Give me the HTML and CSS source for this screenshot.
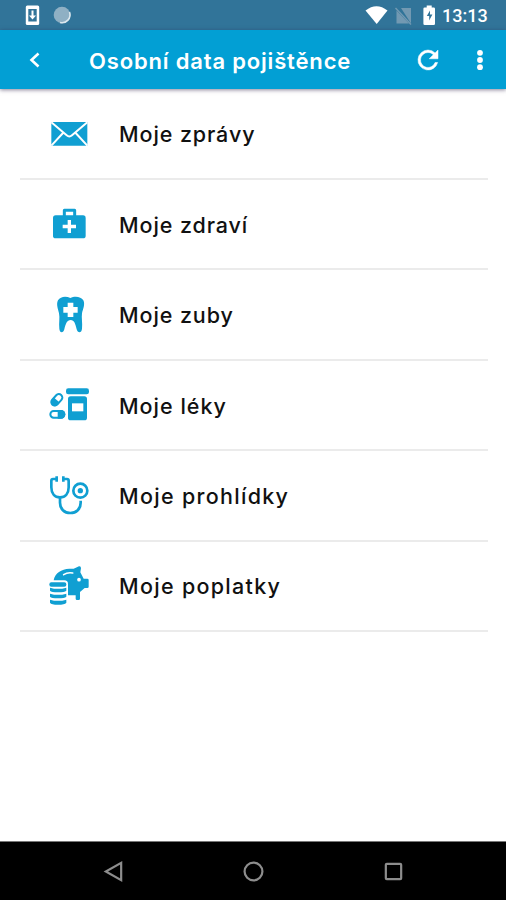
FILE: index.html
```html
<!DOCTYPE html>
<html lang="cs">
<head>
<meta charset="utf-8">
<title>Osobní data pojištěnce</title>
<link rel="stylesheet" href="styles.css">
</head>
<body>
<div class="screen">
  <div class="status">
    <svg class="status-left" viewBox="0 0 54 30">
      <rect x="5.800" y="5.500" width="13.400" height="19.500" rx="1.500" fill="#fff"/>
      <path d="M8.300 9h8.400v12.500H8.300z" fill="#317499"/>
      <path d="M11.500 10.500h2v5h2.500l-3.500 4-3.500-4h2.500z" fill="#fff"/>
      <circle cx="42" cy="15" r="8.300" fill="#8fb0c4"/>
      <path d="M49.500 12a8 8 0 0 1-9.500 10.500" fill="none" stroke="#dce8ee" stroke-width="1.600"/>
    </svg>
    <svg class="status-right" viewBox="0 0 76 30">
      <path d="M5.500 10.500Q16.500 2 27.500 10.500L16.700 24z" fill="#fff"/>
      <path d="M41 8h10v15.500z M36.500 10.500 49 23.500H36.500z" fill="#7299b2"/>
      <path d="m35.500 8 15.500 16.500" stroke="#7299b2" stroke-width="1.400"/>
      <path d="M75 8.700v15a1.300 1.300 0 0 1-1.300 1.300h-9a1.300 1.300 0 0 1-1.300-1.300v-15a1.300 1.300 0 0 1 1.300-1.300h2V5.500h5v1.900h2a1.300 1.300 0 0 1 1.300 1.300z" fill="#fff"/>
      <path d="m70 10.500-3.200 5.500h2.400v4.500l3.200-6H70z" fill="#317499"/>
    </svg>
    <span class="clock">13:13</span>
  </div>
  <header class="bar">
    <svg class="back" viewBox="0 0 24 24"><path d="m15.500 5.500-7 6.500 7 6.500" fill="none" stroke="#fff" stroke-width="2.600"/></svg>
    <h1 class="title">Osobní data pojištěnce</h1>
    <svg class="refresh" viewBox="0 0 24 24"><path d="M17.650 6.350A7.960 7.960 0 0 0 12 4a8 8 0 1 0 7.730 10h-2.080A6 6 0 1 1 12 6c1.660 0 3.140.690 4.220 1.780L13 11h7V4z" fill="#fff" stroke="#fff" stroke-width=".4"/></svg>
    <svg class="more" viewBox="0 0 10 24"><g fill="#fff"><circle cx="5" cy="4.800" r="2.900"/><circle cx="5" cy="12" r="2.900"/><circle cx="5" cy="19.200" r="2.900"/></g></svg>
  </header>
  <main class="list">
    <div class="row">
      <svg class="icon" viewBox="0 0 180 180"><g transform="translate(0 18)">
        <path d="M34 36h108v71H34z" fill="#109fd2"/>
        <path d="m34 37 46 39q8 7 16 0l46-39M34 107l35-38M142 107l-35-38" fill="none" stroke="#fff" stroke-width="6"/>
      </g></svg>
      <span class="label l1">Moje zprávy</span>
    </div>
    <div class="row">
      <svg class="icon" viewBox="0 0 180 180"><g transform="translate(0 16)">
        <rect x="39" y="48" width="98" height="69" rx="8" fill="#109fd2"/>
        <path d="M73 50V33h31v17" fill="none" stroke="#109fd2" stroke-width="9" stroke-linejoin="round"/>
        <path d="M88 62v39M68 81.500h40" stroke="#fff" stroke-width="10"/>
      </g></svg>
      <span class="label l2">Moje zdraví</span>
    </div>
    <div class="row">
      <svg class="icon" viewBox="0 0 180 180">
        <path d="M91 39C104 32 123 34 130 46c6 12-1 26-4 39-2 13 2 29 0 46-1 14-13 14-16 2-4-17-7-28-18-28s-15 11-19 28c-3 12-14 12-15-2-2-17 2-33-1-46-3-14-9-27-3-39 7-12 24-14 37-7z" fill="#109fd2"/>
        <path d="M83 53h17v13h13v17h-13v13H83V83H70V66h13z" fill="#fff"/>
      </svg>
      <span class="label l3">Moje zuby</span>
    </div>
    <div class="row">
      <svg class="icon" viewBox="0 0 180 180"><g transform="translate(0 13)">
        <rect x="78" y="27" width="69" height="18" rx="7" fill="#109fd2"/>
        <rect x="84" y="51" width="57" height="72" rx="8" fill="#109fd2"/>
        <path d="M96 72h34v24H96z" fill="#fff"/>
        <g transform="rotate(-48 50.500 61.500)">
          <rect x="31" y="51" width="39" height="21" rx="10.500" fill="#fff" stroke="#109fd2" stroke-width="6"/>
          <path d="M50 50H41.500a11.500 11.500 0 0 0 0 23H50z" fill="#109fd2"/>
        </g>
        <rect x="31" y="95" width="42" height="20" rx="10" fill="#fff" stroke="#109fd2" stroke-width="6"/>
        <path d="M53 92h10a13 13 0 0 1 0 26H53z" fill="#109fd2"/>
      </g></svg>
      <span class="label l4">Moje léky</span>
    </div>
    <div class="row">
      <svg class="icon" viewBox="0 0 180 180"><g transform="translate(0 -3)" fill="none" stroke="#109fd2" stroke-width="8">
        <path d="M50 42H39q-5 0-5 5v20c0 18 10 30 26 30s26-12 26-30V47q0-5-5-5H70"/>
        <path d="M50 34v16M70 34v16"/>
        <path d="M60 97v16c0 19 13 31 31 31s31-12 31-31v-6"/>
        <circle cx="121" cy="77" r="21"/>
        <circle cx="121" cy="77" r="8" fill="#109fd2" stroke="none"/>
      </g></svg>
      <span class="label l5">Moje prohlídky</span>
    </div>
    <div class="row">
      <svg class="icon" viewBox="0 0 180 180"><g transform="translate(0 -4)">
        <path d="M41 77C45 55 64 43 88 42h13l16-7q6-1 6 6l-2 12 10 19h11q4 0 4 4v20q0 4-4 4h-8l-14 12v20q0 4-4 4h-5q-4 0-4-4v-10H84V88q0-11-11-11z" fill="#109fd2"/>
        <path d="M71 60q12-8 27-5" fill="none" stroke="#fff" stroke-width="5" stroke-linecap="round"/>
        <circle cx="117" cy="75" r="5.500" fill="#fff"/>
        <g fill="#109fd2">
          <rect x="28" y="83" width="51" height="13" rx="6"/>
          <path d="M30 99q24 7 49 0v9q-5 5-25 5t-24-5zM30 117q24 7 49 0v9q-5 5-25 5t-24-5zM30 135q24 7 49 0v9q-5 6-25 6t-24-6z"/>
        </g>
      </g></svg>
      <span class="label l6">Moje poplatky</span>
    </div>
  </main>
  <nav class="nav">
    <svg viewBox="0 0 24 24"><path d="M20 3v18L4 12z"/></svg>
    <svg viewBox="0 0 24 24"><circle cx="12" cy="12" r="9.300"/></svg>
    <svg viewBox="0 0 24 24"><rect x="4" y="4" width="16" height="16" rx="1"/></svg>
  </nav>
</div>
</body>
</html>
```
FILE: styles.css
```css
* { box-sizing: border-box; }
body { margin: 0; background: #fff; font-family: Inter, "Open Sans", sans-serif; }
svg { display: block; flex: none; }
.screen { width: 506px; height: 900px; display: flex; flex-direction: column; overflow: hidden; }
.status { height: 30px; flex: none; display: flex; align-items: center; padding-left: 20px; background: #317499; }
.status-left { width: 54px; height: 30px; }
.status-right { width: 76px; height: 30px; margin-left: 286px; }
.clock { margin: 2px 0 0 6px; color: #fff; font: 500 18px/22px Roboto, sans-serif; }
.bar { height: 59px; flex: none; display: flex; align-items: center; padding-left: 23px; background: #029fd4; box-shadow: 0 1px 4px rgba(40, 30, 70, .55); }
.back { width: 24px; height: 24px; }
.title { width: 310px; margin: 2px 0 0 42px; color: #fff; font-size: 22px; line-height: 28px; font-weight: 600; letter-spacing: .83px; white-space: nowrap; }
.refresh { width: 30px; height: 30px; margin-left: 14px; }
.more { width: 10px; height: 24px; margin-left: 32px; }
.list { flex: 1; padding: .6px 18px 0 20px; }
.row { height: 90.4px; display: flex; align-items: center; padding-left: 20px; border-bottom: 2px solid #ebebeb; }
.icon { width: 60px; height: 60px; margin-top: .6px; }
.label { margin: 1.4px 0 0 19px; color: #111; font-size: 21.5px; line-height: 28px; font-weight: 500; letter-spacing: .9px; white-space: nowrap; }
.l4 { letter-spacing: 1px; }
.l5, .l6 { letter-spacing: 1.3px; }
.nav { height: 59px; flex: none; display: flex; align-items: center; justify-content: center; gap: 117px; background: #000; border-top: 1px solid #777; }
.nav svg { width: 23px; height: 23px; fill: none; stroke: #8d8d8d; stroke-width: 2.3; }
```
